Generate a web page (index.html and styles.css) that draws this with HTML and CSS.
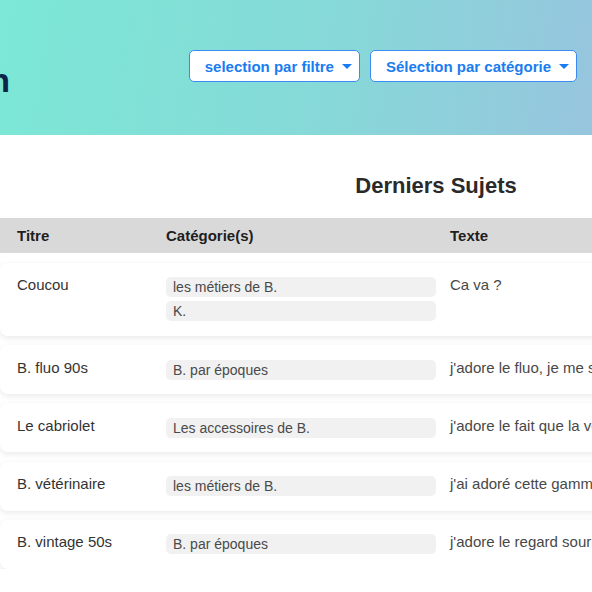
FILE: index.html
```html
<!DOCTYPE html>
<html lang="fr">
<head>
<meta charset="utf-8">
<title>Derniers Sujets</title>
<link rel="stylesheet" href="styles.css">
</head>
<body>
<header class="topbar">
  <div class="logo"><span class="logo-text">BarbieCollection</span></div>
  <nav class="filters">
    <button class="dropdown" type="button">selection par filtre<span class="caret"></span></button>
    <button class="dropdown dropdown-wide" type="button">Sélection par catégorie<span class="caret"></span></button>
  </nav>
</header>
<main class="content">
  <h1 class="page-title">Derniers Sujets</h1>
  <div class="table">
    <div class="table-head">
      <div>Titre</div>
      <div>Catégorie(s)</div>
      <div>Texte</div>
    </div>
    <div class="row">
      <div class="cell">Coucou</div>
      <div class="tags"><span class="tag">les métiers de B.</span><span class="tag">K.</span></div>
      <div class="cell text">Ca va ?</div>
    </div>
    <div class="row">
      <div class="cell">B. fluo 90s</div>
      <div class="tags"><span class="tag">B. par époques</span></div>
      <div class="cell text">j'adore le fluo, je me souviens de mes années collège</div>
    </div>
    <div class="row">
      <div class="cell">Le cabriolet</div>
      <div class="tags"><span class="tag">Les accessoires de B.</span></div>
      <div class="cell text">j'adore le fait que la voiture soit décapotable</div>
    </div>
    <div class="row">
      <div class="cell">B. vétérinaire</div>
      <div class="tags"><span class="tag">les métiers de B.</span></div>
      <div class="cell text">j'ai adoré cette gamme quand j'étais petite</div>
    </div>
    <div class="row">
      <div class="cell">B. vintage 50s</div>
      <div class="tags"><span class="tag">B. par époques</span></div>
      <div class="cell text">j'adore le regard sournois de cette poupée</div>
    </div>
  </div>
</main>
</body>
</html>
```
FILE: styles.css
```css
html, body {
  margin: 0;
  padding: 0;
}
body {
  font-family: "Liberation Sans", Arial, sans-serif;
  background: #ffffff;
  color: #333333;
  overflow: hidden;
  width: 592px;
}
.topbar {
  height: 135px;
  display: flex;
  align-items: flex-start;
  justify-content: space-between;
  padding-right: 15px;
  box-sizing: border-box;
  background: linear-gradient(100deg, #7ce8d6 0%, #86d9d8 55%, #97c5de 100%);
}
.logo {
  width: 9px;
  display: flex;
  justify-content: flex-end;
  margin-top: 63px;
  overflow: hidden;
}
.logo-text {
  white-space: nowrap;
  font-family: "Liberation Sans", Arial, sans-serif;
  font-weight: 700;
  font-size: 34px;
  line-height: 1;
  color: #0b2447;
  letter-spacing: -1px;
}
.filters {
  display: flex;
  gap: 10px;
  margin-top: 50px;
}
.dropdown {
  height: 32px;
  display: flex;
  align-items: center;
  gap: 8px;
  padding: 0 7px 0 15px;
  background: #ffffff;
  border: 1px solid #3a8cf2;
  border-radius: 5px;
  font-family: "Liberation Sans", Arial, sans-serif;
  font-weight: 700;
  font-size: 15px;
  color: #1a7cf0;
  cursor: pointer;
}
.caret {
  width: 0;
  height: 0;
  border-left: 5px solid transparent;
  border-right: 5px solid transparent;
  border-top: 5px solid #1a7cf0;
}
.content {
  width: 872px;
}
.page-title {
  margin: 37.5px 0 19.2px;
  text-align: center;
  font-size: 22px;
  font-weight: 700;
  line-height: normal;
  color: #2a2a2a;
}
.table {
  display: flex;
  flex-direction: column;
  gap: 9.33px;
}
.table-head,
.row {
  display: grid;
  grid-template-columns: 135px 270px 1fr;
  column-gap: 14px;
  padding-left: 17px;
}
.table-head {
  height: 35px;
  line-height: 35px;
  background: #d9d9d9;
  font-weight: 700;
  font-size: 15px;
  color: #1e1e1e;
  margin-bottom: 0.67px;
}
.row {
  background: #ffffff;
  border-radius: 8px;
  box-shadow: 0 2px 6px rgba(0, 0, 0, 0.09);
  padding-top: 14.5px;
  padding-bottom: 14.5px;
  font-size: 15px;
}
.cell {
  line-height: normal;
  white-space: nowrap;
  color: #333333;
  margin-top: -1px;
}
.cell.text {
  color: #484848;
}
.tags {
  display: flex;
  flex-direction: column;
  gap: 4px;
}
.tag {
  display: block;
  height: 20px;
  line-height: 20px;
  padding: 0 7px;
  background: #f1f1f1;
  border-radius: 5px;
  font-size: 14px;
  color: #4a4a4a;
}
```
